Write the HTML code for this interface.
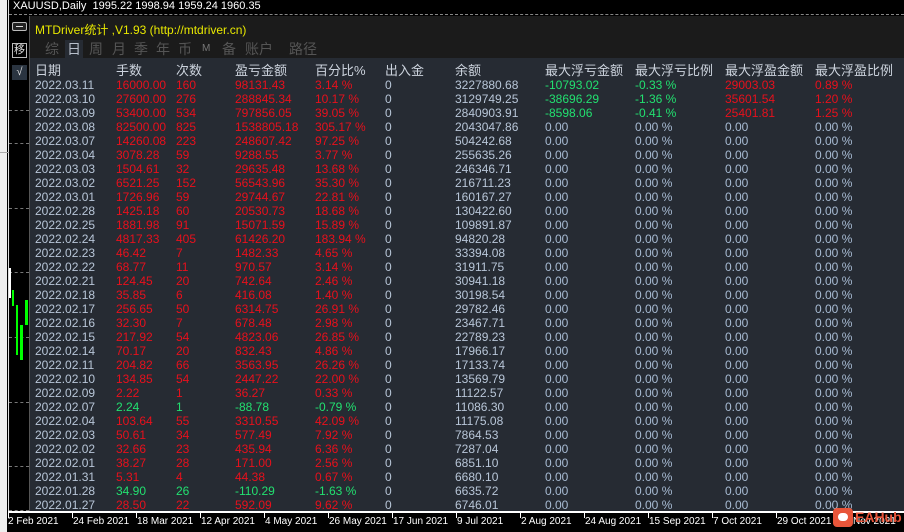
<!DOCTYPE html>
<html><head><meta charset="utf-8"><style>
*{margin:0;padding:0;box-sizing:border-box}
body{width:904px;height:532px;background:#000;position:relative;overflow:hidden;font-family:"Liberation Sans","Noto Sans CJK SC",sans-serif;font-size:12px}
.a{position:absolute}
.lstrip{left:0;top:0;width:7px;height:532px;background:#eee}
.vline{left:8px;top:0;width:1px;height:512px;background:#ddd}
.panel{left:29px;top:16px;width:875px;height:496px;background:#262b33}
.titlebar{left:29px;top:16px;width:875px;height:42px;background:#1b1b1b}
.r{position:absolute;left:0;height:14px;line-height:14px;width:904px}
.r span{position:absolute;white-space:nowrap}
.c1{left:35px;color:#b8c6d8}.c2{left:116px}.c3{left:176px}.c4{left:235px}.c5{left:315px}.c6{left:385px;color:#b8c6d8}.c7{left:455px;color:#b8c6d8}.c8{left:545px}.c9{left:635px}.c10{left:725px}.c11{left:815px}
.R span.c2,.R span.c3,.R span.c4,.R span.c5{color:#e8101c}
.G span.c2,.G span.c3,.G span.c4,.G span.c5{color:#22e070}
.z span.c8,.z span.c9,.z span.c10,.z span.c11{color:#a8bcd4}
.h span{color:#ccd3dd;font-size:13px}
.tick{position:absolute;top:512px;width:1px;height:6px;background:#fff}
.ax span{position:absolute;top:516px;color:#fff;font-size:10px;white-space:nowrap}
.dash{position:absolute;left:9px;width:20px;border-top:1px dashed #777}
.tabs span{position:absolute}
</style></head><body>
<div class="a lstrip"></div>
<div class="a vline"></div>
<div class="a" style="left:9px;top:14px;width:895px;border-top:1px dashed #888"></div>
<div class="a" style="left:13px;top:0;color:#fff;font-size:11px;line-height:12px">XAUUSD,Daily&nbsp; 1995.22 1998.94 1959.24 1960.35</div>
<div class="dash" style="top:110px"></div><div class="dash" style="top:143px"></div><div class="dash" style="top:208px"></div><div class="dash" style="top:272px"></div><div class="dash" style="top:337px"></div><div class="dash" style="top:402px"></div><div class="dash" style="top:466px"></div><div class="dash" style="top:510px"></div>
<div class="a" style="left:0;top:152px;width:9px;height:1px;background:#aaa"></div>
<div class="a" style="left:9px;top:268px;width:2px;height:30px;background:#fff"></div>
<div class="a" style="left:12px;top:290px;width:2px;height:16px;background:#0f0"></div>
<div class="a" style="left:16px;top:305px;width:2px;height:50px;background:#0f0"></div>
<div class="a" style="left:20px;top:325px;width:3px;height:35px;background:#0f0"></div>
<div class="a" style="left:25px;top:300px;width:3px;height:25px;background:#0f0"></div>
<div class="a" style="left:12px;top:22px;width:15px;height:9px;border:1px solid #bbb;border-radius:2px;background:#222"></div>
<div class="a" style="left:16px;top:26px;width:7px;height:1px;background:#ddd"></div>
<div class="a" style="left:12px;top:43px;width:15px;height:15px;border:1px solid #bbb;color:#ddd;font-size:11px;line-height:13px;text-align:center">移</div>
<div class="a" style="left:12px;top:65px;width:15px;height:15px;background:#2a3440;color:#ddd;font-size:11px;line-height:15px;text-align:center">√</div>
<div class="a panel"></div>
<div class="a titlebar"></div>
<div class="a" style="left:29px;top:16px;width:1px;height:496px;background:#555"></div>
<div class="a" style="left:35px;top:21px;color:#e8e800;font-size:12px">MTDriver统计 ,V1.93 (http://mtdriver.cn)</div>
<div class="a" style="left:65px;top:40px;width:18px;height:18px;background:#262b33"></div>
<div class="a tabs" style="left:0;top:40px;color:#555;font-size:14px;white-space:nowrap;line-height:18px;width:400px;height:18px"><span style="left:45px">综</span><span style="left:67px;color:#b8c0cc">日</span><span style="left:89px">周</span><span style="left:112px">月</span><span style="left:134px">季</span><span style="left:156px">年</span><span style="left:178px">币</span><span style="left:202px;font-size:10px;color:#777">M</span><span style="left:222px">备</span><span style="left:245px">账户</span><span style="left:289px">路径</span></div>
<div class="r h" style="top:64px"><span class="c1">日期</span><span class="c2">手数</span><span class="c3">次数</span><span class="c4">盈亏金额</span><span class="c5">百分比%</span><span class="c6">出入金</span><span class="c7">余额</span><span class="c8">最大浮亏金额</span><span class="c9">最大浮亏比例</span><span class="c10">最大浮盈金额</span><span class="c11">最大浮盈比例</span></div>
<div class="r R" style="top:78px"><span class="c1">2022.03.11</span><span class="c2">16000.00</span><span class="c3">160</span><span class="c4">98131.43</span><span class="c5">3.14 %</span><span class="c6">0</span><span class="c7">3227880.68</span><span class="c8" style="color:#22e070">-10793.02</span><span class="c9" style="color:#22e070">-0.33 %</span><span class="c10" style="color:#e8101c">29003.03</span><span class="c11" style="color:#e8101c">0.89 %</span></div>
<div class="r R" style="top:92px"><span class="c1">2022.03.10</span><span class="c2">27600.00</span><span class="c3">276</span><span class="c4">288845.34</span><span class="c5">10.17 %</span><span class="c6">0</span><span class="c7">3129749.25</span><span class="c8" style="color:#22e070">-38696.29</span><span class="c9" style="color:#22e070">-1.36 %</span><span class="c10" style="color:#e8101c">35601.54</span><span class="c11" style="color:#e8101c">1.20 %</span></div>
<div class="r R" style="top:106px"><span class="c1">2022.03.09</span><span class="c2">53400.00</span><span class="c3">534</span><span class="c4">797856.05</span><span class="c5">39.05 %</span><span class="c6">0</span><span class="c7">2840903.91</span><span class="c8" style="color:#22e070">-8598.06</span><span class="c9" style="color:#22e070">-0.41 %</span><span class="c10" style="color:#e8101c">25401.81</span><span class="c11" style="color:#e8101c">1.25 %</span></div>
<div class="r R z" style="top:120px"><span class="c1">2022.03.08</span><span class="c2">82500.00</span><span class="c3">825</span><span class="c4">1538805.18</span><span class="c5">305.17 %</span><span class="c6">0</span><span class="c7">2043047.86</span><span class="c8">0.00</span><span class="c9">0.00 %</span><span class="c10">0.00</span><span class="c11">0.00 %</span></div>
<div class="r R z" style="top:134px"><span class="c1">2022.03.07</span><span class="c2">14260.08</span><span class="c3">223</span><span class="c4">248607.42</span><span class="c5">97.25 %</span><span class="c6">0</span><span class="c7">504242.68</span><span class="c8">0.00</span><span class="c9">0.00 %</span><span class="c10">0.00</span><span class="c11">0.00 %</span></div>
<div class="r R z" style="top:148px"><span class="c1">2022.03.04</span><span class="c2">3078.28</span><span class="c3">59</span><span class="c4">9288.55</span><span class="c5">3.77 %</span><span class="c6">0</span><span class="c7">255635.26</span><span class="c8">0.00</span><span class="c9">0.00 %</span><span class="c10">0.00</span><span class="c11">0.00 %</span></div>
<div class="r R z" style="top:162px"><span class="c1">2022.03.03</span><span class="c2">1504.61</span><span class="c3">32</span><span class="c4">29635.48</span><span class="c5">13.68 %</span><span class="c6">0</span><span class="c7">246346.71</span><span class="c8">0.00</span><span class="c9">0.00 %</span><span class="c10">0.00</span><span class="c11">0.00 %</span></div>
<div class="r R z" style="top:176px"><span class="c1">2022.03.02</span><span class="c2">6521.25</span><span class="c3">152</span><span class="c4">56543.96</span><span class="c5">35.30 %</span><span class="c6">0</span><span class="c7">216711.23</span><span class="c8">0.00</span><span class="c9">0.00 %</span><span class="c10">0.00</span><span class="c11">0.00 %</span></div>
<div class="r R z" style="top:190px"><span class="c1">2022.03.01</span><span class="c2">1726.96</span><span class="c3">59</span><span class="c4">29744.67</span><span class="c5">22.81 %</span><span class="c6">0</span><span class="c7">160167.27</span><span class="c8">0.00</span><span class="c9">0.00 %</span><span class="c10">0.00</span><span class="c11">0.00 %</span></div>
<div class="r R z" style="top:204px"><span class="c1">2022.02.28</span><span class="c2">1425.18</span><span class="c3">60</span><span class="c4">20530.73</span><span class="c5">18.68 %</span><span class="c6">0</span><span class="c7">130422.60</span><span class="c8">0.00</span><span class="c9">0.00 %</span><span class="c10">0.00</span><span class="c11">0.00 %</span></div>
<div class="r R z" style="top:218px"><span class="c1">2022.02.25</span><span class="c2">1881.98</span><span class="c3">91</span><span class="c4">15071.59</span><span class="c5">15.89 %</span><span class="c6">0</span><span class="c7">109891.87</span><span class="c8">0.00</span><span class="c9">0.00 %</span><span class="c10">0.00</span><span class="c11">0.00 %</span></div>
<div class="r R z" style="top:232px"><span class="c1">2022.02.24</span><span class="c2">4817.33</span><span class="c3">405</span><span class="c4">61426.20</span><span class="c5">183.94 %</span><span class="c6">0</span><span class="c7">94820.28</span><span class="c8">0.00</span><span class="c9">0.00 %</span><span class="c10">0.00</span><span class="c11">0.00 %</span></div>
<div class="r R z" style="top:246px"><span class="c1">2022.02.23</span><span class="c2">46.42</span><span class="c3">7</span><span class="c4">1482.33</span><span class="c5">4.65 %</span><span class="c6">0</span><span class="c7">33394.08</span><span class="c8">0.00</span><span class="c9">0.00 %</span><span class="c10">0.00</span><span class="c11">0.00 %</span></div>
<div class="r R z" style="top:260px"><span class="c1">2022.02.22</span><span class="c2">68.77</span><span class="c3">11</span><span class="c4">970.57</span><span class="c5">3.14 %</span><span class="c6">0</span><span class="c7">31911.75</span><span class="c8">0.00</span><span class="c9">0.00 %</span><span class="c10">0.00</span><span class="c11">0.00 %</span></div>
<div class="r R z" style="top:274px"><span class="c1">2022.02.21</span><span class="c2">124.45</span><span class="c3">20</span><span class="c4">742.64</span><span class="c5">2.46 %</span><span class="c6">0</span><span class="c7">30941.18</span><span class="c8">0.00</span><span class="c9">0.00 %</span><span class="c10">0.00</span><span class="c11">0.00 %</span></div>
<div class="r R z" style="top:288px"><span class="c1">2022.02.18</span><span class="c2">35.85</span><span class="c3">6</span><span class="c4">416.08</span><span class="c5">1.40 %</span><span class="c6">0</span><span class="c7">30198.54</span><span class="c8">0.00</span><span class="c9">0.00 %</span><span class="c10">0.00</span><span class="c11">0.00 %</span></div>
<div class="r R z" style="top:302px"><span class="c1">2022.02.17</span><span class="c2">256.65</span><span class="c3">50</span><span class="c4">6314.75</span><span class="c5">26.91 %</span><span class="c6">0</span><span class="c7">29782.46</span><span class="c8">0.00</span><span class="c9">0.00 %</span><span class="c10">0.00</span><span class="c11">0.00 %</span></div>
<div class="r R z" style="top:316px"><span class="c1">2022.02.16</span><span class="c2">32.30</span><span class="c3">7</span><span class="c4">678.48</span><span class="c5">2.98 %</span><span class="c6">0</span><span class="c7">23467.71</span><span class="c8">0.00</span><span class="c9">0.00 %</span><span class="c10">0.00</span><span class="c11">0.00 %</span></div>
<div class="r R z" style="top:330px"><span class="c1">2022.02.15</span><span class="c2">217.92</span><span class="c3">54</span><span class="c4">4823.06</span><span class="c5">26.85 %</span><span class="c6">0</span><span class="c7">22789.23</span><span class="c8">0.00</span><span class="c9">0.00 %</span><span class="c10">0.00</span><span class="c11">0.00 %</span></div>
<div class="r R z" style="top:344px"><span class="c1">2022.02.14</span><span class="c2">70.17</span><span class="c3">20</span><span class="c4">832.43</span><span class="c5">4.86 %</span><span class="c6">0</span><span class="c7">17966.17</span><span class="c8">0.00</span><span class="c9">0.00 %</span><span class="c10">0.00</span><span class="c11">0.00 %</span></div>
<div class="r R z" style="top:358px"><span class="c1">2022.02.11</span><span class="c2">204.82</span><span class="c3">66</span><span class="c4">3563.95</span><span class="c5">26.26 %</span><span class="c6">0</span><span class="c7">17133.74</span><span class="c8">0.00</span><span class="c9">0.00 %</span><span class="c10">0.00</span><span class="c11">0.00 %</span></div>
<div class="r R z" style="top:372px"><span class="c1">2022.02.10</span><span class="c2">134.85</span><span class="c3">54</span><span class="c4">2447.22</span><span class="c5">22.00 %</span><span class="c6">0</span><span class="c7">13569.79</span><span class="c8">0.00</span><span class="c9">0.00 %</span><span class="c10">0.00</span><span class="c11">0.00 %</span></div>
<div class="r R z" style="top:386px"><span class="c1">2022.02.09</span><span class="c2">2.22</span><span class="c3">1</span><span class="c4">36.27</span><span class="c5">0.33 %</span><span class="c6">0</span><span class="c7">11122.57</span><span class="c8">0.00</span><span class="c9">0.00 %</span><span class="c10">0.00</span><span class="c11">0.00 %</span></div>
<div class="r G z" style="top:400px"><span class="c1">2022.02.07</span><span class="c2">2.24</span><span class="c3">1</span><span class="c4">-88.78</span><span class="c5">-0.79 %</span><span class="c6">0</span><span class="c7">11086.30</span><span class="c8">0.00</span><span class="c9">0.00 %</span><span class="c10">0.00</span><span class="c11">0.00 %</span></div>
<div class="r R z" style="top:414px"><span class="c1">2022.02.04</span><span class="c2">103.64</span><span class="c3">55</span><span class="c4">3310.55</span><span class="c5">42.09 %</span><span class="c6">0</span><span class="c7">11175.08</span><span class="c8">0.00</span><span class="c9">0.00 %</span><span class="c10">0.00</span><span class="c11">0.00 %</span></div>
<div class="r R z" style="top:428px"><span class="c1">2022.02.03</span><span class="c2">50.61</span><span class="c3">34</span><span class="c4">577.49</span><span class="c5">7.92 %</span><span class="c6">0</span><span class="c7">7864.53</span><span class="c8">0.00</span><span class="c9">0.00 %</span><span class="c10">0.00</span><span class="c11">0.00 %</span></div>
<div class="r R z" style="top:442px"><span class="c1">2022.02.02</span><span class="c2">32.66</span><span class="c3">23</span><span class="c4">435.94</span><span class="c5">6.36 %</span><span class="c6">0</span><span class="c7">7287.04</span><span class="c8">0.00</span><span class="c9">0.00 %</span><span class="c10">0.00</span><span class="c11">0.00 %</span></div>
<div class="r R z" style="top:456px"><span class="c1">2022.02.01</span><span class="c2">38.27</span><span class="c3">28</span><span class="c4">171.00</span><span class="c5">2.56 %</span><span class="c6">0</span><span class="c7">6851.10</span><span class="c8">0.00</span><span class="c9">0.00 %</span><span class="c10">0.00</span><span class="c11">0.00 %</span></div>
<div class="r R z" style="top:470px"><span class="c1">2022.01.31</span><span class="c2">5.31</span><span class="c3">4</span><span class="c4">44.38</span><span class="c5">0.67 %</span><span class="c6">0</span><span class="c7">6680.10</span><span class="c8">0.00</span><span class="c9">0.00 %</span><span class="c10">0.00</span><span class="c11">0.00 %</span></div>
<div class="r G z" style="top:484px"><span class="c1">2022.01.28</span><span class="c2">34.90</span><span class="c3">26</span><span class="c4">-110.29</span><span class="c5">-1.63 %</span><span class="c6">0</span><span class="c7">6635.72</span><span class="c8">0.00</span><span class="c9">0.00 %</span><span class="c10">0.00</span><span class="c11">0.00 %</span></div>
<div class="r R z" style="top:498px"><span class="c1">2022.01.27</span><span class="c2">28.50</span><span class="c3">22</span><span class="c4">592.09</span><span class="c5">9.62 %</span><span class="c6">0</span><span class="c7">6746.01</span><span class="c8">0.00</span><span class="c9">0.00 %</span><span class="c10">0.00</span><span class="c11">0.00 %</span></div>
<div class="a" style="left:8px;top:511px;width:896px;height:2px;background:#fff"></div>
<div class="ax">
<span style="left:8px">2 Feb 2021</span><span style="left:73px">24 Feb 2021</span><span style="left:137px">18 Mar 2021</span><span style="left:201px">12 Apr 2021</span><span style="left:265px">4 May 2021</span><span style="left:329px">26 May 2021</span><span style="left:393px">17 Jun 2021</span><span style="left:457px">9 Jul 2021</span><span style="left:521px">2 Aug 2021</span><span style="left:585px">24 Aug 2021</span><span style="left:649px">15 Sep 2021</span><span style="left:713px">7 Oct 2021</span><span style="left:777px">29 Oct 2021</span><span style="left:853px">Nov 2021</span>
</div>
<div class="tick" style="left:8px"></div><div class="tick" style="left:72px"></div><div class="tick" style="left:136px"></div><div class="tick" style="left:200px"></div><div class="tick" style="left:264px"></div><div class="tick" style="left:328px"></div><div class="tick" style="left:392px"></div><div class="tick" style="left:456px"></div><div class="tick" style="left:520px"></div><div class="tick" style="left:584px"></div><div class="tick" style="left:648px"></div><div class="tick" style="left:712px"></div><div class="tick" style="left:776px"></div><div class="tick" style="left:840px"></div>
<div class="a" style="left:833px;top:508px;width:20px;height:19px;background:#e8553a;border-radius:4px"></div>
<div class="a" style="left:838px;top:513px;width:10px;height:8px;background:#fff;border-radius:4px"></div>
<div class="a" style="left:855px;top:509px;color:#e8553a;font-size:14px;font-weight:bold">EAHub</div>
</body></html>
